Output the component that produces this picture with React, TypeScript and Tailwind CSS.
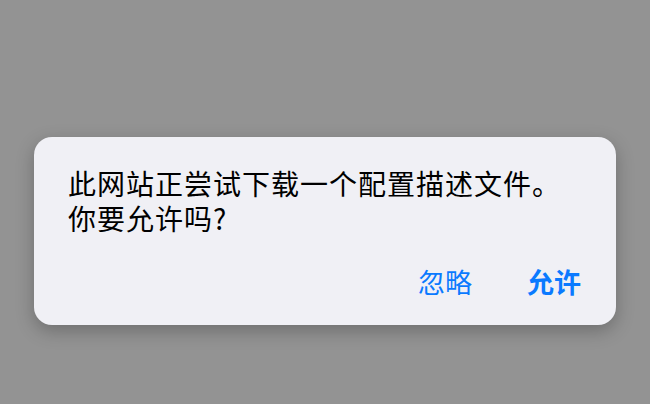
export default function App() {
  return (
    <div
      className="w-[650px] h-[404px] bg-[#939393] pt-[137px] px-[34px]"
      style={{ fontFamily: '"Noto Sans CJK SC", "Noto Sans", sans-serif' }}
    >
      <div className="w-[582px] h-[188px] bg-[#f0f0f5] rounded-[18px] shadow-[0_6px_18px_rgba(0,0,0,0.25)] pl-[34px] pr-[35px] pt-[29px] flex flex-col">
        <p className="text-[28px] leading-[35px] tracking-[1px] text-black">
          此网站正尝试下载一个配置描述文件。
          <br />
          你要允许吗?
        </p>
        <div className="flex justify-end gap-[55px] mt-[28px]">
          <button className="text-[27px] leading-[35px] text-[#0a7aff]">忽略</button>
          <button className="text-[27px] leading-[35px] font-bold text-[#0a7aff]">允许</button>
        </div>
      </div>
    </div>
  );
}
